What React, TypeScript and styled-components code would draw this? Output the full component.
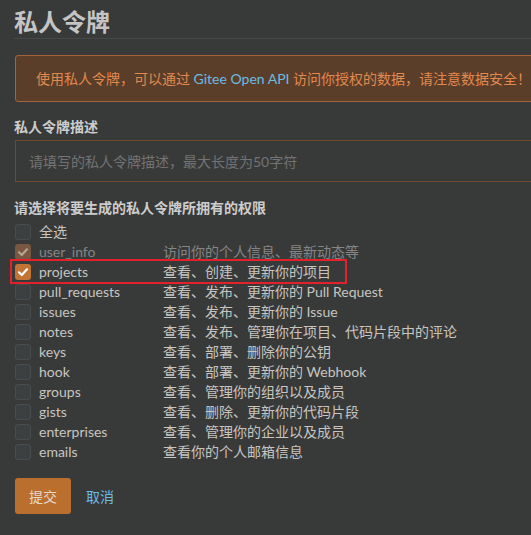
import React from "react";
import styled, { createGlobalStyle, css } from "styled-components";

const Global = createGlobalStyle`
  html, body { margin: 0; padding: 0; background: #383a3a; overflow: hidden; }
  body { font-family: Lato, "Noto Sans CJK SC", sans-serif; font-size: 14px; color: #c8c5c0; }
`;

const Viewport = styled.div`
  width: 100%;
  overflow: hidden;
`;

const Page = styled.div`
  width: 560px;
  padding: 6px 0 0 15px;
`;

const Title = styled.h1`
  margin: 0 0 0 -1px;
  font-size: 24px;
  line-height: 32px;
  font-weight: 700;
  color: #c4c4c4;
  border-bottom: 1px solid #474949;
`;

const Alert = styled.div`
  margin-top: 16px;
  border: 1px solid #a6633a;
  border-radius: 3px;
  background: #5a3e29;
  color: #e2894f;
  padding: 13px 20px 12px;
  line-height: 20px;
  white-space: nowrap;
`;

const Link = styled.span`
  color: #6cbbe2;
`;

const Label = styled.div<{ $top: number }>`
  margin-top: ${(p) => p.$top}px;
  margin-left: -1px;
  font-weight: 700;
  line-height: 20px;
  color: #cdcdcd;
`;

const Input = styled.div`
  margin-top: 3px;
  height: 40px;
  border: 1px solid #6f4a2e;
  padding: 0 13px;
  display: flex;
  align-items: center;
  color: #737373;
`;

const List = styled.div`
  margin-top: 4px;
  display: flex;
  flex-direction: column;
`;

const Row = styled.div<{ $marked?: boolean }>`
  position: relative;
  display: grid;
  grid-template-columns: 16px 116px 1fr;
  column-gap: 8px;
  align-items: center;
  height: 20px;
  line-height: 20px;
  ${(p) =>
    p.$marked &&
    css`
      &::after {
        content: "";
        position: absolute;
        left: -5px;
        top: -3px;
        width: 333px;
        height: 21px;
        border: 2px solid #e3212b;
      }
    `}
`;

const Box = styled.span<{ $state: "off" | "on" | "disabled" }>`
  width: 16px;
  height: 16px;
  box-sizing: border-box;
  border-radius: 3px;
  display: flex;
  align-items: center;
  justify-content: center;
  ${(p) =>
    p.$state === "off"
      ? css`
          background: #3d4040;
          border: 1px solid #4a4d4d;
        `
      : p.$state === "on"
      ? css`
          background: #c17433;
          color: #ffffff;
        `
      : css`
          background: #7a5740;
          color: #b3a596;
        `}
`;

const Name = styled.span<{ $dim?: boolean }>`
  color: ${(p) => (p.$dim ? "#858585" : "#c8c5c0")};
  white-space: nowrap;
`;

const Desc = styled.span<{ $dim?: boolean }>`
  color: ${(p) => (p.$dim ? "#858585" : "#c8c5c0")};
  white-space: nowrap;
`;

const Actions = styled.div`
  margin-top: 16px;
  display: flex;
  align-items: center;
  gap: 15px;
`;

const Submit = styled.button`
  width: 56px;
  height: 36px;
  border: none;
  border-radius: 3px;
  background: #bb6f2f;
  color: #e4d8cc;
  font-family: inherit;
  font-size: 14px;
  padding: 0;
`;

const Cancel = styled.span`
  color: #6cbbe2;
`;

const Check = () => (
  <svg width="12" height="12" viewBox="0 0 12 12">
    <path d="M2 6.3 L4.8 9 L10 3.3" fill="none" stroke="currentColor" strokeWidth="2.2" strokeLinecap="round" strokeLinejoin="round" />
  </svg>
);

type Perm = { name: string; desc: string; state: "off" | "on" | "disabled"; marked?: boolean };

const perms: Perm[] = [
  { name: "全选", desc: "", state: "off" },
  { name: "user_info", desc: "访问你的个人信息、最新动态等", state: "disabled" },
  { name: "projects", desc: "查看、创建、更新你的项目", state: "on", marked: true },
  { name: "pull_requests", desc: "查看、发布、更新你的 Pull Request", state: "off" },
  { name: "issues", desc: "查看、发布、更新你的 Issue", state: "off" },
  { name: "notes", desc: "查看、发布、管理你在项目、代码片段中的评论", state: "off" },
  { name: "keys", desc: "查看、部署、删除你的公钥", state: "off" },
  { name: "hook", desc: "查看、部署、更新你的 Webhook", state: "off" },
  { name: "groups", desc: "查看、管理你的组织以及成员", state: "off" },
  { name: "gists", desc: "查看、删除、更新你的代码片段", state: "off" },
  { name: "enterprises", desc: "查看、管理你的企业以及成员", state: "off" },
  { name: "emails", desc: "查看你的个人邮箱信息", state: "off" },
];

export default function App() {
  return (
    <>
      <Global />
      <Viewport>
        <Page>
          <Title>私人令牌</Title>
          <Alert>
            使用私人令牌，可以通过 <Link>Gitee Open API</Link> 访问你授权的数据，请注意数据安全！
          </Alert>
          <Label $top={15}>私人令牌描述</Label>
          <Input>请填写的私人令牌描述，最大长度为50字符</Input>
          <Label $top={16}>请选择将要生成的私人令牌所拥有的权限</Label>
          <List>
            {perms.map((p) => (
              <Row key={p.name} $marked={p.marked}>
                <Box $state={p.state}>{p.state !== "off" && <Check />}</Box>
                <Name $dim={p.state === "disabled"}>{p.name}</Name>
                <Desc $dim={p.state === "disabled"}>{p.desc}</Desc>
              </Row>
            ))}
          </List>
          <Actions>
            <Submit>提交</Submit>
            <Cancel>取消</Cancel>
          </Actions>
        </Page>
      </Viewport>
    </>
  );
}
